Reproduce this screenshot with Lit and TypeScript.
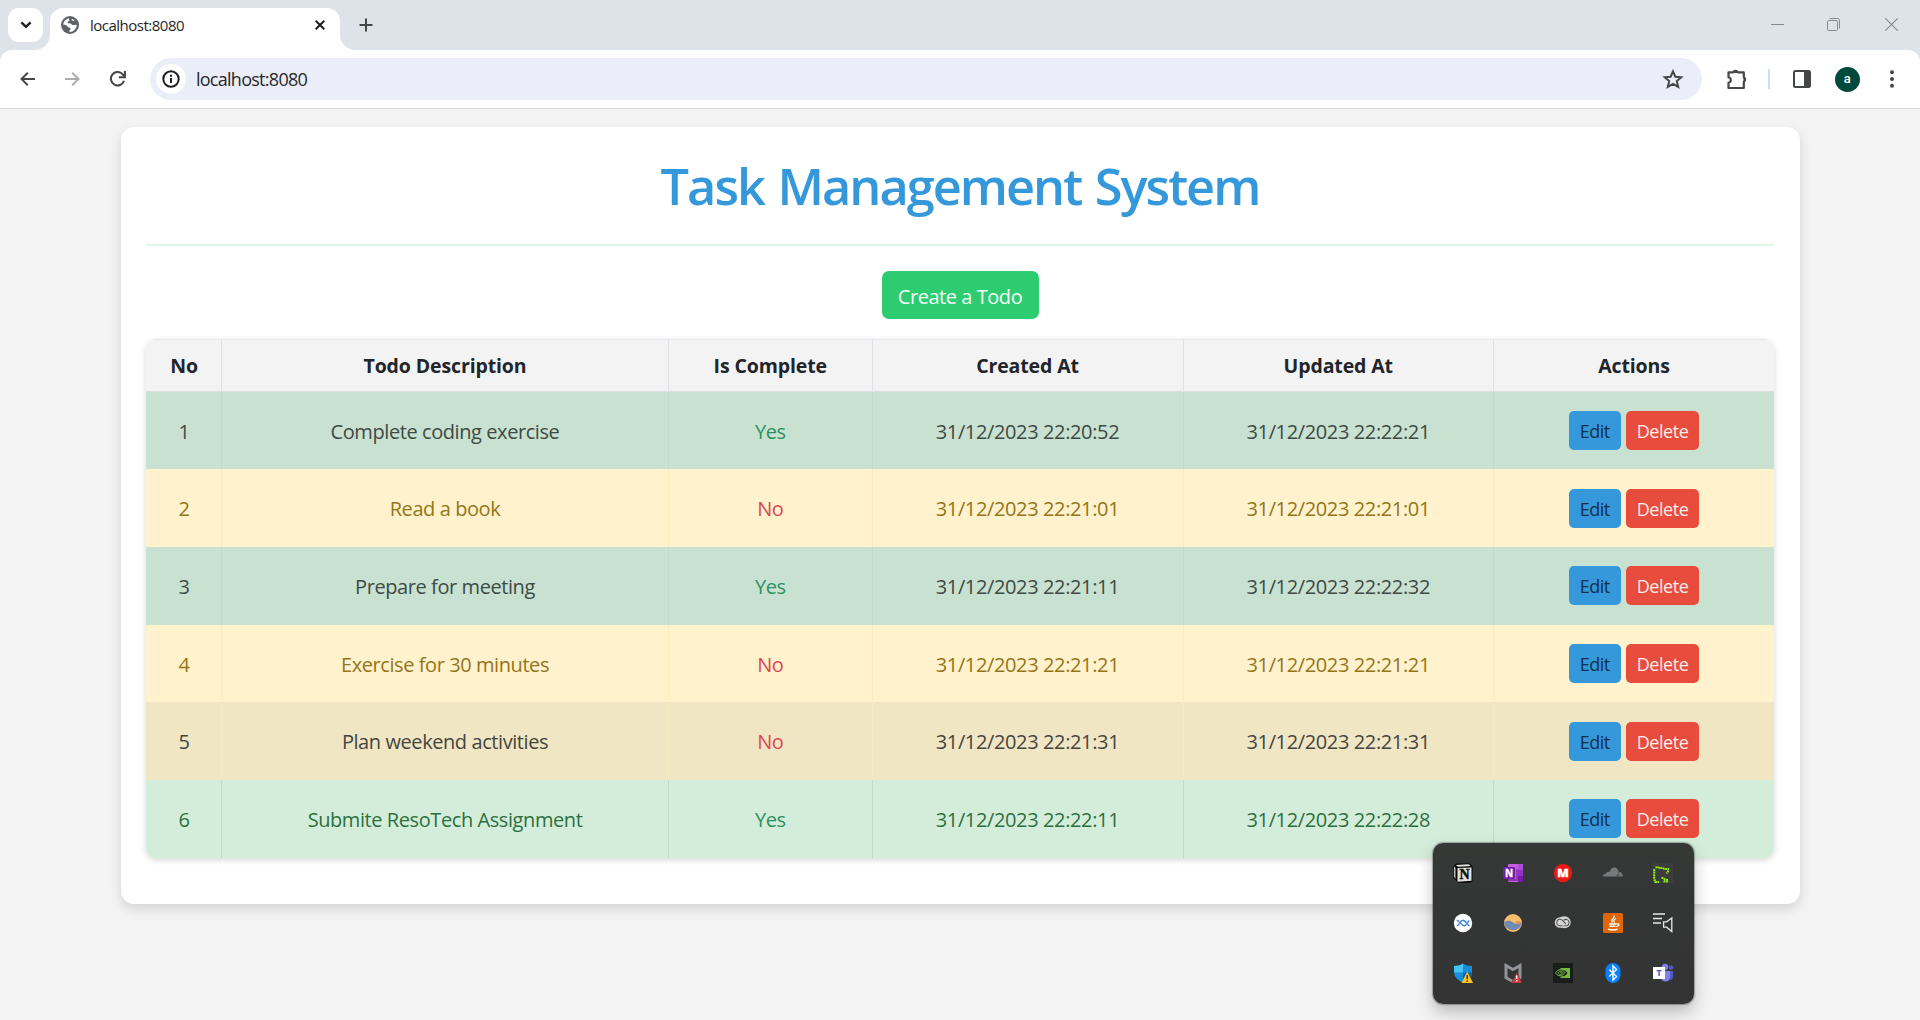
import { LitElement, html, svg, css } from "lit";
import { customElement } from "lit/decorators.js";
import { classMap } from "lit/directives/class-map.js";

interface Todo {
  no: number;
  description: string;
  complete: boolean;
  created: string;
  updated: string;
  muted: boolean;
}

const TODOS: Todo[] = [
  { no: 1, description: "Complete coding exercise", complete: true, created: "31/12/2023 22:20:52", updated: "31/12/2023 22:22:21", muted: true },
  { no: 2, description: "Read a book", complete: false, created: "31/12/2023 22:21:01", updated: "31/12/2023 22:21:01", muted: false },
  { no: 3, description: "Prepare for meeting", complete: true, created: "31/12/2023 22:21:11", updated: "31/12/2023 22:22:32", muted: true },
  { no: 4, description: "Exercise for 30 minutes", complete: false, created: "31/12/2023 22:21:21", updated: "31/12/2023 22:21:21", muted: false },
  { no: 5, description: "Plan weekend activities", complete: false, created: "31/12/2023 22:21:31", updated: "31/12/2023 22:21:31", muted: true },
  { no: 6, description: "Submite ResoTech Assignment", complete: true, created: "31/12/2023 22:22:11", updated: "31/12/2023 22:22:28", muted: false },
];

@customElement("browser-chrome")
export class BrowserChrome extends LitElement {
  static styles = css`
    :host { display: block; font-family: "Open Sans", "Noto Sans", sans-serif; color: #1f1f1f; }
    svg { display: block; }
    .strip { display: flex; height: 50px; background: #dee2e9; align-items: flex-start; }
    .drop { width: 35px; height: 34px; margin: 8px 0 0 8px; border-radius: 11px; background: #fff; display: grid; place-items: center; }
    .tab { position: relative; width: 290px; height: 42.5px; margin: 7.5px 0 0 7px; border-radius: 13px 13px 0 0; background: #fff; display: flex; align-items: center; box-sizing: border-box; padding: 0 15px 7px 11px; }
    .tab::before, .tab::after { content: ""; position: absolute; bottom: 0; width: 15px; height: 15px; }
    .tab::before { left: -15px; background: radial-gradient(circle at 0 0, transparent 14.5px, #fff 15.2px); }
    .tab::after { right: -15px; background: radial-gradient(circle at 100% 0, transparent 14.5px, #fff 15.2px); }
    .title { flex: 1; margin-left: 11px; font-size: 15px; line-height: 20px; letter-spacing: -0.5px; }
    .plus { margin: 18px 0 0 18.5px; }
    .window { margin-left: auto; display: flex; gap: 43px; padding: 18px 22px 0 0; }
    .last { margin-left: 2px; }
    .under { background: #dee2e9; }
    .toolbar { height: 58px; background: #fff; border-radius: 12px 12px 0 0; display: flex; align-items: center; padding-left: 5.5px; border-bottom: 1px solid #dcdcdc; box-sizing: content-box; }
    .btn { width: 44.8px; display: grid; place-items: center; flex: none; }
    .omnibox { width: 1551.5px; height: 42px; border-radius: 21px; margin-left: 10.5px; background: #ebeef8; display: flex; align-items: center; box-sizing: border-box; padding: 0 18px 0 5.5px; }
    .info { width: 30px; height: 30px; border-radius: 50%; background: #fff; display: grid; place-items: center; }
    .url { flex: 1; margin-left: 10px; font-size: 18px; line-height: 24px; letter-spacing: -0.72px; color: #27282b; }
    .ext { margin-left: 13px; }
    .rule { width: 2px; height: 20px; background: #c9ddfb; margin: 0 10px 0 8px; }
    .avatar { width: 25px; height: 25px; border-radius: 50%; background: #00493c; color: #fff; font: 500 13px/23px Roboto, sans-serif; text-align: center; margin-left: 1px; }
  `;

  render() {
    return html`
      <div class="strip">
        <div class="drop">
          <svg width="12" height="8" viewBox="0 0 12 8" fill="none" stroke="#1f1f1f" stroke-width="2.4"><path d="M1.4 1.4 6 5.8l4.600-4.400" /></svg>
        </div>
        <div class="tab">
          <svg width="18" height="18" viewBox="0 0 18 18">
            <circle cx="9" cy="9" r="9" fill="#5f6368" />
            <path d="M2.200 8.500C2.500 5.500 5 2.600 8.200 2.200c-.6.900-.4 1.500.4 1.900-.3 1.500-1.800 1.200-2.100 2.500-.3 1.100 1.200.8 2.600.9 1.600.1 1.700 1.200 2.600 1.500 1.200.3 3-.4 4-.1C15.500 12.300 13 15.500 9.300 15.800c-1.500 0-1.300-1.300-.3-1.900 1-.7.700-1.800-.5-2.100-1.600-.4-2-1.900-3.100-2.600-.9-.5-2.200-.1-3.200-.7z" fill="#fff" />
            <path d="M11 3.200c.2 1 1.200 1.300 2.200 1.200" stroke="#fff" stroke-width="1.200" fill="none" />
          </svg>
          <span class="title">localhost:8080</span>
          <svg width="10" height="10" viewBox="0 0 10 10" stroke="#1f1f1f" stroke-width="2"><path d="M.7.7l8.600 8.600M9.300.7.7 9.300" /></svg>
        </div>
        <svg class="plus" width="14" height="14" viewBox="0 0 14 14" stroke="#444746" stroke-width="2"><path d="M7 .5v13M.5 7h13" /></svg>
        <div class="window">
          <svg width="13" height="13" viewBox="0 0 13 13" stroke="#868a90"><path d="M0 6.500h13" /></svg>
          <svg width="13" height="13" viewBox="0 0 13 13" stroke="#868a90" fill="none"><rect x=".5" y="2.500" width="10" height="10" rx="1.200" /><path d="M2.500.5h8a2 2 0 0 1 2 2v8" /></svg>
          <svg class="last" width="13" height="13" viewBox="0 0 13 13" stroke="#868a90" stroke-width="1.100"><path d="M.3.3l12.400 12.400M12.700.3.3 12.700" /></svg>
        </div>
      </div>
      <div class="under">
        <div class="toolbar">
          <div class="btn"><svg width="15" height="14" viewBox="0 0 15 14" stroke="#444746" stroke-width="2" fill="none"><path d="M15 7H1.500M7.800.7 1.500 7l6.300 6.300" /></svg></div>
          <div class="btn"><svg width="15" height="14" viewBox="0 0 15 14" stroke="#abacab" stroke-width="2" fill="none"><path d="M0 7h13.500M7.200.7 13.500 7l-6.300 6.300" /></svg></div>
          <div class="btn"><svg width="17" height="16" viewBox="-1 0 17 16" stroke="#444746" stroke-width="2.100" fill="none"><path d="M14 9.700A6.700 6.700 0 1 1 12.900 3.600L14.300 5.300" /><path d="M14.900 0v6.200H8.800" /></svg></div>
          <div class="omnibox">
            <div class="info"><svg width="18" height="18" viewBox="0 0 18 18" fill="none" stroke="#1f1f1f" stroke-width="2"><circle cx="9" cy="9" r="7.700" /><path d="M9 8v5M9 4.700v2" /></svg></div>
            <span class="url">localhost:8080</span>
            <svg width="22" height="20" viewBox="0 0 22 20" fill="none" stroke="#444746" stroke-width="2"><path d="M11 2.300l2.400 5.400 5.900.5-4.500 3.900 1.400 5.800L11 14.800l-5.200 3.100 1.400-5.800-4.500-3.900 5.900-.5z" /></svg>
          </div>
          <div class="btn ext"><svg width="22" height="22" viewBox="0 0 22 22"><path d="M2.500 4.300h4.700a2.600 2.600 0 0 1 4.600 0h6v5a2.500 2.500 0 0 1 0 4.400v6.300H2.500v-5.200c3-.7 3-4.900 0-5.600z" fill="none" stroke="#444746" stroke-width="2.200" stroke-linejoin="round" /><path d="M7 4.500a2.700 2.700 0 0 1 5 0zM18 9.200a2.800 2.800 0 0 1 0 4.800z" fill="#444746" stroke="#444746" /></svg></div>
          <div class="rule"></div>
          <div class="btn"><svg width="18" height="18" viewBox="0 0 18 18"><rect x="1" y="1" width="16" height="16" rx="1.500" fill="none" stroke="#444746" stroke-width="2" /><path d="M11 1h6v16h-6z" fill="#444746" /></svg></div>
          <div class="btn"><div class="avatar">a</div></div>
          <div class="btn"><svg width="4" height="18" viewBox="0 0 4 18" fill="#444746"><circle cx="2" cy="2.200" r="2" /><circle cx="2" cy="9" r="2" /><circle cx="2" cy="15.800" r="2" /></svg></div>
        </div>
      </div>
    `;
  }
}

const TRAY_ICONS = [
  svg`<path d="M.5 3 3 .5h14l2.500 3v15l-3 1.300H5L.5 15z" fill="#080808"/><path d="M2.500 2 15.500 1.300l2.300 1.700-12.500.8z" fill="#e8e6e3"/><path d="M1 3.500 2.500 4.700v11.500L1 13.500z" fill="#bbb9b6"/><path d="M4.500 5l14-.6v13.300l-14 1z" fill="#e4e2df"/><text x="11.600" y="16.200" text-anchor="middle" font-family="Liberation Serif, serif" font-weight="700" font-size="14" fill="#111" stroke="#111" stroke-width=".5">N</text>`,
  svg`<rect x="5" y="1" width="15" height="18" rx="1" fill="#c45ee0"/><path d="M15 1h5v6h-5z" fill="#ae4bd5"/><path d="M15 7h5v6h-5z" fill="#9332bf"/><path d="M15 13h5v6h-5z" fill="#7719aa"/><path d="M5 16h8V6h2v12H5z" fill="#8c3ab0"/><rect x="0" y="4" width="12" height="12" rx="1" fill="#7719aa"/><text x="6" y="13.600" text-anchor="middle" font-family="Open Sans, sans-serif" font-weight="700" font-size="10" fill="#fff" stroke="#fff" stroke-width=".4">N</text>`,
  svg`<circle cx="10" cy="10" r="9.200" fill="#e81a17"/><text x="10" y="13.600" text-anchor="middle" textLength="11.500" lengthAdjust="spacingAndGlyphs" font-family="Open Sans, sans-serif" font-weight="800" font-size="10" fill="#fff" stroke="#fff" stroke-width=".3">M</text>`,
  svg`<path d="M0 13.500c0-2 1.500-3 3.300-3C3.500 9 5 8.300 6.500 9 7.500 5.500 9.500 4 12 4.500c2 .4 3.200 2 3.500 4.200 2.500 0 4.300 1.800 4.500 4.800z" fill="#777a7d"/><path d="M13.500 12.500h1.500l.8-1.800M16 9l-.3 1.300" stroke="#34383a" stroke-width=".8" fill="none"/>`,
  svg`<rect width="20" height="20" fill="#3d3d3d"/><g fill="none" stroke="#8df20a" stroke-width="2" stroke-dasharray="2 .6"><path d="M1.200 6v9.500l1 3.500H6M2.500 4.500 5 4l1.500 1h3l2 1H16M15.500 7.500l-2 3M8.500 15h2l1.500 1.500 3 .5M10.500 18.500h5"/></g>`,
  svg`<circle cx="10" cy="10" r="9.200" fill="#fff"/><path d="M3.800 7.300c2.700 0 4.300 5.400 7.500 5.400 2.200 0 2.700-2 4.700-5M3.800 12.700c2.700 0 3.200-5.400 6.200-5.400s4 5.400 6.500 5.400" fill="none" stroke="#3f7de0" stroke-width="1.400"/><path d="M6.300 8v4M13.800 8v4" stroke="#8fb4ee" stroke-width=".8"/>`,
  svg`<circle cx="10" cy="10" r="9" fill="#f7bd6d"/><path d="M1 9.500C3.500 7.500 7 7 10 9.500c2.500 2 5.500 1.500 8.800.3A9 9 0 0 1 1 9.500z" fill="#7189b5"/><path d="M12 9.500l3-1.500 3.800 1v1l-3.500 1.200z" fill="#df914f"/>`,
  svg`<path d="M1.700 9.500A5.500 5.500 0 0 1 7 4.200c1 0 1.700-1 4.700-1a6 6 0 1 1 0 12c-2 0-2.700-.4-4.700-.4a5.300 5.300 0 0 1-5.300-5.300z" fill="#d4d4d4"/><path d="M9.500 12.700H7a3.200 3.200 0 0 1 0-6.400c1.300 0 2 .5 2.800 1.400l3 3.200M10.700 12.700c3.300.4 5.300 0 5.300-3.200 0-3.200-3.800-3.900-5.300-2.100" fill="none" stroke="#5a5a5a" stroke-width="1.100"/>`,
  svg`<rect width="20" height="20" rx="1.500" fill="#df6708"/><path d="M11 2.500c2 2.500-4.500 3.500-1.500 7M13 5.500c-2.500 1.200-3 2.300-1.300 4" fill="none" stroke="#fff" stroke-width="1.200"/><path d="M6 11h7.500M6.500 13.300h6M5 16.200c3 1 7 1 9.500 0" fill="none" stroke="#fff" stroke-width="1.400"/><path d="M13.500 11c3.500-1 3.500 2-.5 2.500" fill="none" stroke="#fff" stroke-width="1.200"/>`,
  svg`<path d="M0 1h12M0 5.500h9M0 10h8" stroke="#e8e8e8" stroke-width="1.300"/><path d="M10.600 8.800h3L18.800 5v13.500l-5.200-4.300h-3z" fill="none" stroke="#e8e8e8" stroke-width="1.300"/>`,
  svg`<path d="M10 .5c3 1.800 5.500 2.500 9 2.500v6c0 5-4 8.500-9 10.500C5 17.500 1 14 1 9V3c3.500 0 6-.7 9-2.500z" fill="#178fdc"/><path d="M10 .5v9H1V3c3.500 0 6-.7 9-2.500z" fill="#43c5f4"/><path d="M10 9.500h9C18.800 14 15 17.500 10 19.500z" fill="#0d61b3"/><path d="M14.200 8.500 20 20H8.500z" fill="#fcc419"/><path d="M14.200 12v4.200M14.200 17.200v1.500" stroke="#222" stroke-width="1.300"/>`,
  svg`<path d="M3 2.500l7 4 7-4v12.200l-7 3.800-7-3.800z" fill="none" stroke="#929498" stroke-width="3"/><path d="M13.700 9.500 19 20H8.500z" fill="#e23b40" stroke="#343634" stroke-width=".5"/><path d="M13.700 12.500v3.500M13.700 17v1.500" stroke="#fff" stroke-width="1.300"/>`,
  svg`<rect width="20" height="20" fill="#1a1e1a"/><path d="M7.500 5H17v10H7.500v-1.500c4 0 6-1.500 7-3.500-1.500-2-3.500-3.500-7-3.500z" fill="#76b93f"/><path d="M2.500 9.800C5 6 9 5.500 12 9.500c-2.500 4-7 4.500-9.500.3z" fill="#1a1e1a" stroke="#76b93f" stroke-width="1"/><path d="M5 9.800c1.500-2.200 3.500-2.200 5-.2-1.500 2.400-3.500 2.400-5 .2z" fill="none" stroke="#76b93f" stroke-width="1"/><path d="M7.200 9.700h1.500" stroke="#76b93f"/>`,
  svg`<rect x="2.500" y="0" width="15" height="20" rx="7.500" fill="#0a82fa"/><path d="M6.300 6.500l7.200 7L10 17V3l3.500 3.500-7.200 7" fill="none" stroke="#fff" stroke-width="1.400"/>`,
  svg`<circle cx="12" cy="4" r="3.200" fill="#7b83eb"/><circle cx="18" cy="4.500" r="2.200" fill="#5059c9"/><path d="M14 8h6v6c0 2-1.500 3-3.500 3z" fill="#5059c9"/><path d="M8 8h9v6c0 3-2 4.500-4.500 4.500S8 17 8 14z" fill="#7b83eb"/><rect x="0" y="4" width="12" height="12" fill="#fff"/><text x="6" y="13.300" text-anchor="middle" font-family="Open Sans, sans-serif" font-weight="700" font-size="9.500" fill="#5059c9">T</text>`,
];

@customElement("system-tray")
export class SystemTray extends LitElement {
  static styles = css`
    :host { display: block; }
    .tray { width: 261px; height: 161.500px; box-sizing: border-box; padding: 5px; border-radius: 10px; background: linear-gradient(#343936, #343635 35%, #333); box-shadow: 0 8px 16px rgba(0, 0, 0, 0.24), 0 0 1px 1px rgba(90, 90, 90, 0.45); display: grid; grid-template-columns: repeat(5, 50px); grid-auto-rows: 50px; }
    .cell { display: grid; place-items: center; }
    svg { display: block; overflow: visible; }
  `;

  render() {
    return html`<div class="tray">
      ${TRAY_ICONS.map((icon) => html`<div class="cell"><svg width="20" height="20" viewBox="0 0 20 20">${icon}</svg></div>`)}
    </div>`;
  }
}

@customElement("todo-table")
export class TodoTable extends LitElement {
  static styles = css`
    :host { display: block; }
    .table { border-radius: 10px; overflow: hidden; box-shadow: 0 2px 6px rgba(0, 0, 0, 0.16); font-size: 20px; letter-spacing: -0.42px; }
    .row { display: grid; grid-template-columns: 75px 447px 203.500px 311px 310.500px 281px; height: 77.680px; --line: #c4ddcf; }
    .row > div { display: flex; align-items: center; justify-content: center; border-left: 1px solid var(--line); padding: 1.200px 0 0; box-sizing: border-box; }
    .row > div:first-child { border-left-color: transparent; }
    .head { height: 52.700px; background: #f3f3f3; font-weight: 700; font-size: 19.500px; letter-spacing: -0.120px; color: #212529; --line: #dee2e6; box-shadow: inset 0 1px #e5e8ec, inset 0 -1px #dcdfe2; }
    .done { background: #d4edda; color: #2c7040; --line: #bfd9cb; }
    .open { background: #fff2cd; color: #957518; --line: #fbecc0; }
    .done.muted { background: #c9e1d0; color: #3d4a46; --line: #c0dccd; }
    .open.muted { background: #f1e6c3; color: #44453f; --line: #f8eac0; }
    .date { letter-spacing: -0.370px; }
    .yes { color: #2b9160; }
    .no { color: #dd4754; }
    .row > .actions { gap: 4.700px; padding-top: 0; }
    .edit, .delete { height: 39px; border-radius: 5px; font: 400 18px/41px "Open Sans", "Noto Sans", sans-serif; text-align: center; letter-spacing: -0.5px; }
    .edit { width: 52.300px; background: #3498db; color: #12304a; }
    .delete { width: 73.700px; background: #e74c3c; color: #fdeeec; letter-spacing: -0.450px; }
  `;

  render() {
    return html`<div class="table">
      <div class="row head">
        <div>No</div><div>Todo Description</div><div>Is Complete</div><div>Created At</div><div>Updated At</div><div>Actions</div>
      </div>
      ${TODOS.map(
        (t) => html`<div class=${classMap({ row: true, done: t.complete, open: !t.complete, muted: t.muted })}>
          <div>${t.no}</div>
          <div>${t.description}</div>
          <div class=${t.complete ? "yes" : "no"}>${t.complete ? "Yes" : "No"}</div>
          <div class="date">${t.created}</div>
          <div class="date">${t.updated}</div>
          <div class="actions"><span class="edit">Edit</span><span class="delete">Delete</span></div>
        </div>`
      )}
    </div>`;
  }
}

@customElement("app-root")
export class AppRoot extends LitElement {
  static styles = css`
    :host { display: block; position: relative; width: 1920px; height: 1020px; overflow: hidden; background: #f3f3f3; font-family: "Open Sans", "Noto Sans", sans-serif; }
    .card { width: 1679px; height: 776.500px; margin: 18px 0 0 120.500px; border-radius: 13px; background: #fff; box-sizing: border-box; padding: 0 25.500px; box-shadow: 0 5px 12px rgba(0, 0, 0, 0.13); display: flex; flex-direction: column; align-items: center; }
    .heading { margin: 0; height: 117px; align-self: stretch; box-sizing: border-box; padding-top: 23.500px; text-align: center; font-size: 50.500px; line-height: 70px; font-weight: 580; letter-spacing: -2px; word-spacing: 2.500px; color: #3498db; }
    .divider { align-self: stretch; height: 2px; background: #dff6e7; }
    .create { width: 157px; height: 48.300px; margin: 24.700px 0 20px; border-radius: 7px; background: #2ecc71; color: #f4fdf7; font-size: 20px; line-height: 52px; letter-spacing: -0.450px; text-align: center; }
    .list { align-self: stretch; }
    .overlay { position: absolute; left: 1433px; top: 842.800px; }
  `;

  render() {
    return html`
      <browser-chrome></browser-chrome>
      <div class="card">
        <h1 class="heading">Task Management System</h1>
        <div class="divider"></div>
        <div class="create">Create a Todo</div>
        <todo-table class="list"></todo-table>
      </div>
      <system-tray class="overlay"></system-tray>
    `;
  }
}
